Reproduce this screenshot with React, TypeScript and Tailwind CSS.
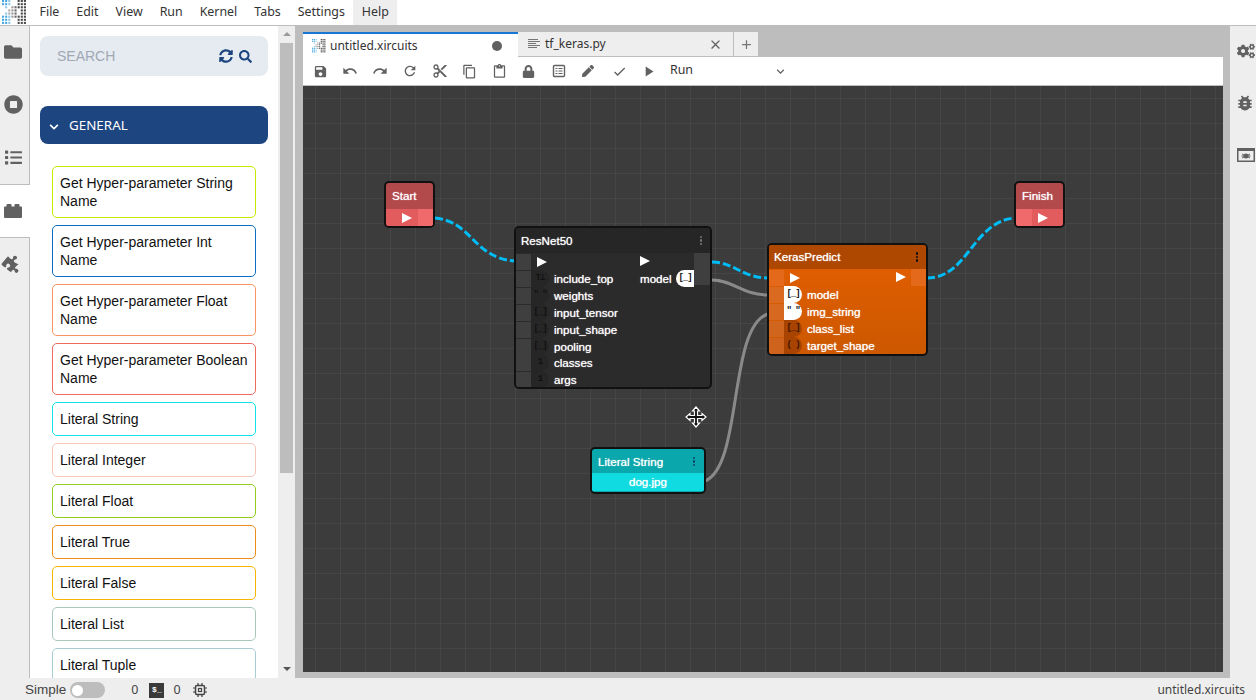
import React from "react";
import { FaFolder, FaStopCircle, FaList, FaPuzzlePiece, FaCogs, FaSyncAlt, FaSearch, FaChevronDown, FaPen, FaLock } from "react-icons/fa";
import { MdSave, MdUndo, MdRedo, MdRefresh, MdContentCut, MdContentCopy, MdContentPaste, MdCheck, MdPlayArrow, MdClose, MdAdd, MdExpandMore, MdBugReport } from "react-icons/md";

const Logo = ({ size = 25 }: { size?: number }) => {
  const dots: React.ReactNode[] = [];
  for (let c = 0; c < 8; c++) {
    for (let r = 0; r < 8; r++) {
      let fill = "";
      if (c <= 2 && (r <= 1 || r >= 5)) fill = c === 2 ? "#8cc8ea" : "#45a8e0";
      if (c === 1 && (r === 2 || r === 4)) fill = "#8cc8ea";
      if (c === 2 && (r === 3 || r === 4)) fill = "#aaaaaa";
      if ((c === 3 || c === 4) && r >= 2 && r <= 5) fill = c === 3 ? "#9a9a9a" : "#666666";
      if (c >= 5 && !(c === 5 && (r === 3 || r === 4 ))) fill = "#4a4a4a";
      if (!fill) continue;
      dots.push(<rect key={`${c}-${r}`} x={c * 3} y={r * 3} width={2} height={2} fill={fill} />);
    }
  }
  return <svg width={size} height={size} viewBox="0 0 24 24">{dots}</svg>;
};

const Block = ({ className = "" }: { className?: string }) => (
  <svg viewBox="0 0 18 14" className={className} fill="currentColor">
    <path d="M0 3.500a1 1 0 0 1 1-1h1.500V1a1 1 0 0 1 1-1h3a1 1 0 0 1 1 1v1.500h3V1a1 1 0 0 1 1-1h3a1 1 0 0 1 1 1v1.500H17a1 1 0 0 1 1 1V13a1 1 0 0 1-1 1H1a1 1 0 0 1-1-1z" />
  </svg>
);

const Item = ({ name, color, two }: { name: string; color: string; two?: boolean }) => (
  <div className={`shrink-0 border rounded-[5px] bg-white px-[7px] text-[14px] leading-[18px] text-[#111] font-['Liberation_Sans',sans-serif] flex items-center ${two ? "h-[52px]" : "h-[34px]"}`} style={{ borderColor: color }}>
    <span>{name}</span>
  </div>
);

const Tri = ({ className = "" }: { className?: string }) => (
  <svg viewBox="0 0 10 10" className={`w-[10px] h-[10px] ${className}`}><polygon points="0,0 10,5 0,10" fill="#fff" /></svg>
);

const nodeText = "font-['Liberation_Sans',sans-serif] text-[11.6px] text-white [text-shadow:0_0_1px_rgba(255,255,255,0.9)]";
const glyphText = "font-['Liberation_Mono',monospace] text-[9px] tracking-[-1px] font-bold";

const Row = ({ glyph, label, on, shade, port, glyphColor, className = "" }: { glyph: string; label: string; on?: boolean; shade: string; port: string; glyphColor: string; className?: string }) => (
  <div className={`flex items-center h-[17px] ${className}`}>
    <div className="w-[15px] h-[16px] shrink-0" style={{ background: port }} />
    <div className={`w-[18px] h-[17px] rounded-r-[9px] shrink-0 flex items-center justify-center ${glyphText}`} style={{ background: on ? "#fff" : shade, color: on ? "#111" : glyphColor }}>{glyph}</div>
    <span className={`ml-[5px] ${nodeText}`}>{label}</span>
  </div>
);

const Dots = ({ color }: { color: string }) => (
  <span className="flex flex-col gap-[1px]">
    {[0, 1, 2].map((i) => <i key={i} className="w-[2.500px] h-[2.500px] rounded-full" style={{ background: color }} />)}
  </span>
);

const menus = ["File", "Edit", "View", "Run", "Kernel", "Tabs", "Settings", "Help"];
const items: [string, string, boolean][] = [
  ["Get Hyper-parameter String Name", "#c9e800", true],
  ["Get Hyper-parameter Int Name", "#0a6ec4", true],
  ["Get Hyper-parameter Float Name", "#f79362", true],
  ["Get Hyper-parameter Boolean Name", "#ef6a5f", true],
  ["Literal String", "#12e0e8", false],
  ["Literal Integer", "#f5c6b8", false],
  ["Literal Float", "#8fce1e", false],
  ["Literal True", "#f08c1a", false],
  ["Literal False", "#f7b500", false],
  ["Literal List", "#a9c9b8", false],
  ["Literal Tuple", "#a8ccd4", false],
];

export default function App() {
  return (
    <div className="w-[1256px] h-[700px] overflow-hidden flex flex-col bg-[#bdbdbd] font-['Noto_Sans',sans-serif] text-[#333]">
      {/* Menu bar */}
      <div className="h-[26px] shrink-0 bg-white border-b border-[#bdbdbd] flex items-center">
        <div className="w-[30px] pl-[2px] flex items-center"><Logo /></div>
        <div className="flex items-center h-full ml-[1px] text-[12.4px]">
          {menus.map((m) => (
            <div key={m} className={`h-full px-[8.5px] flex items-center ${m === "Help" ? "bg-[#eeeeee]" : ""}`}>{m}</div>
          ))}
        </div>
      </div>

      {/* Body */}
      <div className="flex-1 min-h-0 flex">
        {/* Left tabs */}
        <div className="w-[30px] shrink-0 bg-[#eeeeee] border-r border-[#bdbdbd] flex flex-col text-[#616161] pr-[3px]">
          <div className="h-[53px] -mt-[1px] flex items-center justify-center"><FaFolder className="w-[18px] h-[18px]" /></div>
          <div className="h-[53px] flex items-center justify-center"><FaStopCircle className="w-[19px] h-[19px]" /></div>
          <div className="h-[53px] flex items-center justify-center"><FaList className="w-[17px] h-[17px]" /></div>
          <div className="h-[54px] -mr-[4px] pr-[4px] flex items-center justify-center bg-white border-y border-[#bdbdbd]"><Block className="w-[18px] h-[14px]" /></div>
          <div className="h-[52px] flex items-center justify-center"><FaPuzzlePiece className="w-[18px] h-[18px] rotate-[40deg]" /></div>
        </div>

        {/* Component panel */}
        <div className="w-[248px] shrink-0 bg-white flex flex-col pt-[10px] pl-[10px] pr-[10px] overflow-hidden">
          <div className="h-[40px] shrink-0 bg-[#e6ebf2] rounded-[8px] flex items-center pl-[17px] pr-[16px] font-['Liberation_Sans',sans-serif]">
            <span className="text-[14px] text-[#a0a8b4] flex-1">SEARCH</span>
            <FaSyncAlt className="w-[14px] h-[14px] text-[#1d4580]" />
            <FaSearch className="w-[13px] h-[13px] ml-[6px] text-[#1d4580]" />
          </div>
          <div className="h-[38px] mt-[30px] shrink-0 bg-[#1d4580] rounded-[8px] flex items-center pl-[9px] text-white text-[13.4px]">
            <FaChevronDown className="w-[10px] h-[10px] mr-[10px] mt-[3px]" />
            <span className="mt-[1px]">GENERAL</span>
          </div>
          <div className="mt-[22px] mx-[12px] flex flex-col gap-[7px]">
            {items.map(([n, c, t]) => <Item key={n} name={n} color={c} two={t} />)}
          </div>
        </div>

        {/* Scrollbar */}
        <div className="w-[17px] shrink-0 bg-[#eeeeee] flex flex-col items-center relative">
          <div className="pt-[6px]"><svg width="8" height="4" viewBox="0 0 8 4" className="block"><polygon points="4,0 8,4 0,4" fill="#9a9a9a" /></svg></div>
          <div className="w-[13px] h-[430px] mt-[7px] bg-[#bdbdbd]" />
          <div className="absolute bottom-[7px]"><svg width="8" height="4" viewBox="0 0 8 4" className="block"><polygon points="0,0 8,0 4,4" fill="#555" /></svg></div>
        </div>

        {/* Main area */}
        <div className="w-[920px] shrink-0 ml-[8px] flex flex-col pt-[6px]">
          {/* Tabs */}
          <div className="h-[25px] shrink-0 flex items-stretch text-[12px]">
            <div className="w-[215px] bg-white border-t-2 border-[#1976d2] flex items-center pl-[9px] pr-[16px] text-[#333]">
              <Logo size={14} />
              <span className="ml-[4px] flex-1">untitled.xircuits</span>
              <span className="w-[10px] h-[10px] rounded-full bg-[#616161]" />
            </div>
            <div className="w-[216px] bg-[#eeeeee] border-b border-[#bdbdbd] border-r flex items-center pl-[10px] pr-[10px]">
              <svg viewBox="0 0 12 10" className="w-[12px] h-[10px]" stroke="#757575" strokeWidth="1"><path d="M0 .5h10M0 2.500h12M0 4.500h8M0 6.500h12M0 8.500h9" /></svg>
              <span className="ml-[5px] flex-1">tf_keras.py</span>
              <MdClose className="w-[15px] h-[15px] text-[#616161]" />
            </div>
            <div className="w-[24px] bg-[#eeeeee] border-b border-[#bdbdbd] flex items-center justify-center">
              <MdAdd className="w-[15px] h-[15px] text-[#757575]" />
            </div>
          </div>
          {/* Toolbar */}
          <div className="h-[29px] shrink-0 bg-white flex items-center pl-[10px] text-[#616161] border-b border-[#bdbdbd]">
            <span className="w-[30px]"><MdSave className="w-[15px] h-[15px]" /></span>
            <span className="w-[30px] -ml-[1px]"><MdUndo className="w-[16px] h-[16px]" /></span>
            <span className="w-[30px]"><MdRedo className="w-[16px] h-[16px]" /></span>
            <span className="w-[30px]"><MdRefresh className="w-[16px] h-[16px]" /></span>
            <span className="w-[30px]"><MdContentCut className="w-[16px] h-[16px]" /></span>
            <span className="w-[30px]"><MdContentCopy className="w-[15px] h-[15px]" /></span>
            <span className="w-[30px]"><MdContentPaste className="w-[15px] h-[15px]" /></span>
            <span className="w-[30px]"><FaLock className="w-[13px] h-[13px]" /></span>
            <span className="w-[30px]">
              <svg viewBox="0 0 14 14" className="w-[14px] h-[14px]" fill="none" stroke="currentColor"><rect x="1.500" y="1.500" width="11" height="11" rx="1" strokeWidth="1.4" /><path d="M3.500 4.500h2M6.500 4.500h4M3.500 7h2M6.500 7h4M3.500 9.500h2M6.500 9.500h4" strokeWidth="1.2" /></svg>
            </span>
            <span className="w-[30px]"><FaPen className="w-[12px] h-[12px]" /></span>
            <span className="w-[30px]"><MdCheck className="w-[15px] h-[15px]" /></span>
            <span className="w-[30px] -ml-[2px]"><MdPlayArrow className="w-[17px] h-[17px]" /></span>
            <span className="w-[103px] -mt-[1px] text-[12.4px] text-[#333]">Run</span>
            <MdExpandMore className="w-[15px] h-[15px]" />
          </div>
          {/* Canvas */}
          <div className="relative h-[586px] overflow-hidden bg-[#3c3c3c] bg-[linear-gradient(#464646_1px,transparent_1px),linear-gradient(90deg,#464646_1px,transparent_1px)] bg-[size:25px_25px] bg-[position:12px_12px]">
            <svg className="absolute inset-0" width="920" height="586" fill="none">
              <path d="M132 132 C 170 136, 170 172, 212 175" stroke="#00bdf7" strokeWidth="3" strokeDasharray="8 3" />
              <path d="M409 176 C 430 176, 440 192, 465 192" stroke="#00bdf7" strokeWidth="3" strokeDasharray="8 3" />
              <path d="M624 192 C 665 192, 670 135, 712 132" stroke="#00bdf7" strokeWidth="3" strokeDasharray="8 3" />
              <path d="M409 194 C 430 194, 440 209, 465 209" stroke="#8a8a8a" strokeWidth="3" />
              <path d="M402 395 C 440 380, 425 240, 465 228" stroke="#8a8a8a" strokeWidth="3" />
            </svg>

            {/* Start */}
            <div className="absolute left-[81px] top-[95px] w-[51px] h-[47px] rounded-[5px] border-2 border-[#111] bg-[#b24a4c] overflow-hidden">
              <div className={`h-[26px] pl-[6px] pb-[1px] flex items-center ${nodeText}`}>Start</div>
              <div className="h-[17px] bg-[#e25c5e] flex items-center">
                <Tri className="ml-[16px]" />
                <div className="ml-[6px] flex-1 h-full bg-[#f06a6c]" />
              </div>
            </div>

            {/* ResNet50 */}
            <div className="absolute left-[211px] top-[140px] w-[198px] h-[163px] rounded-[5px] border-2 border-[#111] bg-[#2b2b2b] overflow-hidden">
              <div className="h-[25px] bg-[#262626] pl-[5px] pr-[8px] flex items-center justify-between">
                <span className={nodeText}>ResNet50</span>
                <Dots color="#777" />
              </div>
              <div className="relative">
                <div className="flex items-center h-[17px]">
                  <div className="w-[15px] h-[16px] bg-[#3f3f3f]" />
                  <Tri className="ml-[6px]" />
                </div>
                {([["T⊥", "include_top"], ["\" \"", "weights"], ["[_]", "input_tensor"], ["[_]", "input_shape"], ["[_]", "pooling"], ["1", "classes"], ["1", "args"]] as const).map(([g, l]) => (
                  <Row key={l} glyph={g} label={l} shade="#262626" port="#3f3f3f" glyphColor="#111" className={l === "classes" ? "-mt-[1px]" : ""} />
                ))}
                <div className="absolute left-[124px] top-[3px]"><Tri /></div>
                <div className="absolute right-0 top-0 w-[16px] h-[32px] bg-[#3f3f3f]" />
                <div className={`absolute left-[124px] top-[17px] h-[17px] flex items-center ${nodeText}`}>model</div>
                <div className={`absolute left-[160px] top-[17px] w-[18px] h-[17px] rounded-l-[9px] bg-white text-[#111] flex items-center justify-center ${glyphText}`}>[_]</div>
              </div>
            </div>

            {/* KerasPredict */}
            <div className="absolute left-[464px] top-[157px] w-[161px] h-[113px] rounded-[5px] border-2 border-[#111] bg-[linear-gradient(#e45f00,#cc5800)] overflow-hidden">
              <div className="h-[24px] bg-[#ae4700] pl-[5px] pr-[8px] flex items-center justify-between">
                <span className={nodeText}>KerasPredict</span>
                <Dots color="#111" />
              </div>
              <div className="relative">
                <div className="flex items-center h-[17px]">
                  <div className="w-[15px] h-[16px] bg-[#e5691a]" />
                  <Tri className="ml-[6px]" />
                </div>
                <Row glyph="[_]" label="model" on shade="#a84400" port="#d96a1f" glyphColor="#111" />
                <Row glyph={'" "'} label="img_string" on shade="#a84400" port="#d6681f" glyphColor="#111" />
                <Row glyph="[_]" label="class_list" shade="#a84400" port="#d0651e" glyphColor="#3a1500" />
                <Row glyph="( )" label="target_shape" shade="#a84400" port="#cd631d" glyphColor="#3a1500" />
                <div className="absolute left-[127px] top-[3px]"><Tri /></div>
                <div className="absolute right-0 top-0 w-[15px] h-[17px] bg-[#e5691a]" />
              </div>
            </div>

            {/* Literal String */}
            <div className="absolute left-[287px] top-[361px] w-[116px] h-[47px] rounded-[5px] border-2 border-[#111] bg-[#0aa7ac] overflow-hidden">
              <div className="h-[25px] pl-[6px] pr-[9px] flex items-center justify-between">
                <span className={nodeText}>Literal String</span>
                <Dots color="#14406e" />
              </div>
              <div className={`h-[18px] -mt-[1px] bg-[#10dbe0] flex items-center justify-center ${nodeText}`}>dog.jpg</div>
            </div>

            {/* Finish */}
            <div className="absolute left-[711px] top-[95px] w-[51px] h-[47px] rounded-[5px] border-2 border-[#111] bg-[#b24a4c] overflow-hidden">
              <div className={`h-[26px] pl-[6px] pb-[1px] flex items-center ${nodeText}`}>Finish</div>
              <div className="h-[17px] bg-[#e25c5e] flex items-center">
                <div className="w-[16px] h-full bg-[#f06a6c]" />
                <Tri className="ml-[6px]" />
              </div>
            </div>

            {/* Move cursor */}
            <svg className="absolute left-[382px] top-[320px]" width="22" height="22" viewBox="0 0 22 22">
              <path d="M11 1l3.500 4H12.500v4.500H17V7.500l4 3.500-4 3.500V12.500h-4.500V17h2L11 21l-3.500-4h2v-4.500H5v2L1 11l4-3.500v2h4.500V5h-2z" fill="#111" stroke="#fff" strokeWidth="1.2" />
            </svg>
          </div>
        </div>

        {/* Right sidebar */}
        <div className="w-[26px] ml-[7px] shrink-0 bg-[#eeeeee] flex flex-col items-center text-[#616161]">
          <div className="h-[52px] -mt-[1px] flex items-center justify-center"><FaCogs className="w-[18px] h-[18px] ml-[5px]" /></div>
          <div className="h-[52px] flex items-center justify-center"><MdBugReport className="w-[20px] h-[20px] ml-[4px]" /></div>
          <div className="h-[52px] flex items-center justify-center ml-[5px]">
            <svg viewBox="0 0 18 14" className="w-[18px] h-[14px]"><rect x=".75" y=".75" width="16.500" height="12.500" fill="none" stroke="currentColor" strokeWidth="1.5" /><rect x="1" y="1" width="16" height="2" fill="currentColor" /><circle cx="9" cy="8" r="2.500" fill="currentColor" /><path d="M5 6l8 4M13 6l-8 4M4.500 8h9" stroke="currentColor" /></svg>
          </div>
        </div>
      </div>

      {/* Status bar */}
      <div className="h-[22px] shrink-0 bg-[#eeeeee] flex items-center text-[12.5px] text-[#444] pr-[11px] pt-[2px]">
        <span className="ml-[25px] font-['Liberation_Sans',sans-serif] text-[13.5px]">Simple</span>
        <div className="ml-[4px] w-[35px] h-[16px] rounded-full bg-[#bdbdbd] flex items-center pl-[2px]"><div className="w-[11px] h-[11px] rounded-full bg-white" /></div>
        <span className="ml-[26px]">0</span>
        <div className="ml-[11px] w-[15px] h-[15px] bg-[#3a3a3a] text-white text-[8px] font-bold flex items-center justify-center font-['Liberation_Mono',monospace]">$_</div>
        <span className="ml-[9px]">0</span>
        <svg viewBox="0 0 14 14" className="ml-[12px] w-[14px] h-[14px]" fill="none" stroke="#444"><rect x="2.500" y="2.500" width="9" height="9" rx="1.500" strokeWidth="1.500" /><rect x="5.500" y="5.500" width="3" height="3" strokeWidth="1.200" /><path d="M5 0v2.500M9 0v2.500M5 11.500V14M9 11.500V14M0 5h2.500M0 9h2.500M11.500 5H14M11.500 9H14" strokeWidth="1.200" /></svg>
        <span className="ml-auto text-[12px]">untitled.xircuits</span>
      </div>
    </div>
  );
}
